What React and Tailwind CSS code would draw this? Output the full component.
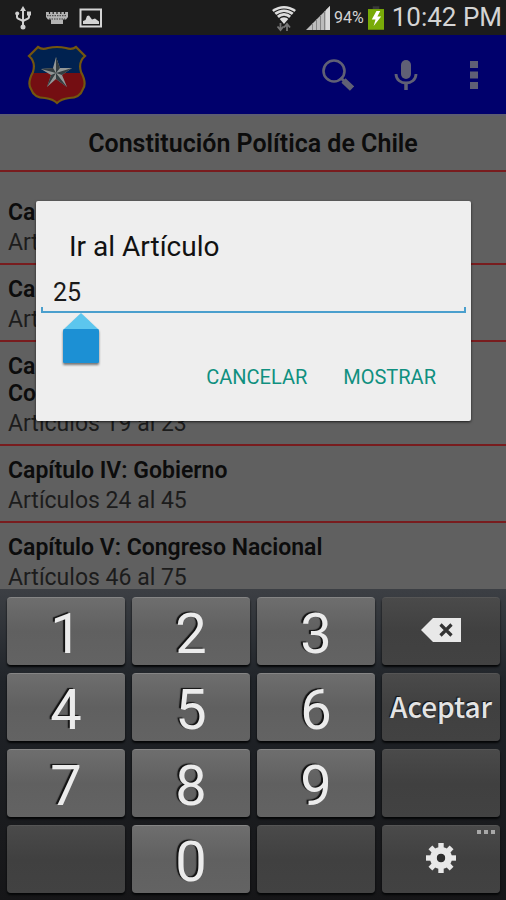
import { useState } from "react";

const CHAPTERS = [
    { title: "Capítulo I: Bases de la Institucionalidad", range: "Artículos 1 al 9" },
    { title: "Capítulo II: Nacionalidad y Ciudadanía", range: "Artículos 10 al 18" },
    { title: "Capítulo III: Derechos y Deberes Constitucionales", range: "Artículos 19 al 23" },
    { title: "Capítulo IV: Gobierno", range: "Artículos 24 al 45" },
    { title: "Capítulo V: Congreso Nacional", range: "Artículos 46 al 75" },
];

const KEYS = ["1", "2", "3", "delete", "4", "5", "6", "accept", "7", "8", "9", "blank-a", "blank-b", "0", "blank-c", "settings"];

function UsbIcon() {
    return (
        <svg className="h-6 w-4" viewBox="0 0 16 24" fill="none" stroke="#d0d0d0" strokeWidth="2">
            <path d="M8 3v17M2 8v3c0 3 6 2 6 5M14 8v3c0 3-6 2-6 5" />
            <path d="M8 0l3 5H5z" fill="#d0d0d0" stroke="none" />
            <circle cx="8" cy="21" r="2.5" fill="#d0d0d0" stroke="none" />
            <circle cx="2.2" cy="7.5" r="2" fill="#d0d0d0" stroke="none" />
            <path d="M12 5.500h4v4h-4z" fill="#d0d0d0" stroke="none" />
        </svg>
    );
}

function KeyboardIcon() {
    return (
        <svg className="h-3 w-[22px]" viewBox="0 0 22 12">
            <path d="M0 0h22v5l-2 2.500h-3V12H5V7.500H2L0 5z" fill="#b4b4b4" />
            <path d="M1 3.700h20M3 7h16" stroke="#2a2a2a" strokeWidth="0.9" strokeDasharray="1.500 1" />
            <path d="M3.500 0v2M7.200 0v2M11 0v2M14.800 0v2M18.500 0v2" stroke="#1c1c1c" strokeWidth="1.200" />
        </svg>
    );
}

function PictureIcon() {
    return (
        <svg className="h-5 w-6" viewBox="0 0 24 20">
            <path d="M1.500 1.500h20.500v17h-20.500z" fill="none" stroke="#d4d4d4" strokeWidth="2" />
            <path d="M4 16v-3l2.500-1 1.500-4 2-.5 3 4 3-1 4 3v2.500z" fill="#d4d4d4" />
        </svg>
    );
}

function WifiIcon() {
    return (
        <svg className="h-7 w-7" viewBox="0 0 28 28" fill="none">
            <path d="M2 6Q14 -2 26 6L14 20z" fill="#dedede" />
            <path d="M3 9Q14 1 25 9M5.500 12Q14 5 22.500 12M8.500 15Q14 10 19.500 15" stroke="#1c1c1c" strokeWidth="1.200" />
            <path d="M10.500 19v6M7.500 22.500l3 3.500 3-3.500M17 27v-6M14 23.500l3-3.500 3 3.500" stroke="#777" strokeWidth="1.800" />
        </svg>
    );
}

function SignalIcon() {
    return (
        <svg className="h-6 w-6" viewBox="0 0 24 24">
            <path d="M0 24L24 0v24z" fill="#bcbcbc" />
            <path d="M6.500 17v7M10.500 13v11M14.500 9v15M18.500 5v19" stroke="#858585" strokeWidth="1" />
            <path d="M20 4l4-4v24h-4z" fill="#dadada" />
        </svg>
    );
}

function BatteryIcon() {
    return (
        <svg className="h-6 w-4" viewBox="0 0 17 25">
            <path d="M5 0h7v3H5z" fill="#383838" />
            <path d="M0 3h17v22H0z" fill="#79ab08" />
            <path d="M9 5L4 14h4l-2 7 8-10h-4l3-6z" fill="#fff" />
        </svg>
    );
}

function ShieldLogo() {
    return (
        <svg className="h-[60px] w-[60px]" viewBox="0 0 60 60">
            <defs>
                <clipPath id="shield">
                    <path d="M11 2Q15 5 21 3Q30 1 39 3Q45 5 49 2L58 11Q51 17 54 27Q60 38 56 44Q53 53 42 53Q34 54 30 58Q26 54 18 53Q7 53 4 44Q0 38 6 27Q9 17 2 11z" />
                </clipPath>
            </defs>
            <g clipPath="url(#shield)">
                <path d="M0 0h60v28H0z" fill="#002250" />
                <path d="M0 28h60v32H0z" fill="#740e12" />
            </g>
            <path
                d="M11 2Q15 5 21 3Q30 1 39 3Q45 5 49 2L58 11Q51 17 54 27Q60 38 56 44Q53 53 42 53Q34 54 30 58Q26 54 18 53Q7 53 4 44Q0 38 6 27Q9 17 2 11z"
                fill="none"
                stroke="#73560f"
                strokeWidth="2.200"
            />
            <path d="M29 12l4 11 12 0-10 7 5 12-11-8-9 8 4-12-10-6 12-1z" fill="#929797" />
            <path d="M29 12l4 11-4 5zM45 23l-10 7-6-2zM40 42l-11-8v-6zM20 42l4-12 5-2zM14 24l12-1 3 5z" fill="#343d40" />
        </svg>
    );
}

function SearchIcon() {
    return (
        <svg className="h-8 w-8" viewBox="0 0 32 32" fill="none" stroke="#606075">
            <circle cx="12" cy="12" r="10.500" strokeWidth="2.600" />
            <path d="M18.500 18.500l4 4" strokeWidth="3" />
            <path d="M21.500 21.500l8.500 8" strokeWidth="6" />
        </svg>
    );
}

function MicIcon() {
    return (
        <svg className="h-8 w-6" viewBox="0 0 24 32" fill="none" stroke="#606075">
            <rect x="7" y="1" width="10" height="19" rx="5" fill="#606075" stroke="none" />
            <path d="M2 15c0 12 20 12 20 0" strokeWidth="2.800" />
            <path d="M12 24v7" strokeWidth="3.500" />
        </svg>
    );
}

function DotsIcon() {
    return (
        <svg className="h-7 w-2" viewBox="0 0 8 28" fill="#606075">
            <path d="M0 0h8v7H0zM0 10.500h8v7H0zM0 21h8v7H0z" />
        </svg>
    );
}

function BackspaceIcon() {
    return (
        <svg className="h-6 w-10" viewBox="0 0 40 24">
            <path d="M0 12L12 0h28v24H12z" fill="#e8e8e8" />
            <path d="M19.500 6.500l11 11M30.500 6.500l-11 11" stroke="#333" strokeWidth="3.200" />
        </svg>
    );
}

function GearIcon() {
    const teeth = [0, 45, 90, 135, 180, 225, 270, 315];

    return (
        <svg className="h-[30px] w-[30px]" viewBox="0 0 30 30">
            {teeth.map((angle) => (
                <path key={angle} d="M12.300 0h5.400v7h-5.400z" fill="#e8e8e8" transform={`rotate(${angle} 15 15)`} />
            ))}
            <circle cx="15" cy="15" r="7.500" fill="none" stroke="#e8e8e8" strokeWidth="7" />
            <circle cx="15" cy="15" r="4.200" fill="#2e2e2e" />
        </svg>
    );
}

function StatusBar() {
    return (
        <div className="flex h-[35px] shrink-0 items-center justify-between bg-[#1c1c1c] pr-1 pl-[15px] text-[#d4d4d4]">
            <div className="flex items-center gap-[15px]">
                <UsbIcon />
                <KeyboardIcon />
                <div className="-ml-1">
                    <PictureIcon />
                </div>
            </div>
            <div className="flex items-center">
                <WifiIcon />
                <div className="ml-2">
                    <SignalIcon />
                </div>
                <span className="ml-1 text-base">94%</span>
                <div className="ml-1">
                    <BatteryIcon />
                </div>
                <span className="ml-2 text-[26px]">10:42 PM</span>
            </div>
        </div>
    );
}

function AppBar() {
    return (
        <header className="flex h-[79px] shrink-0 items-center justify-between bg-[#00006c] pr-7 pl-[27px]">
            <ShieldLogo />
            <div className="flex items-center">
                <button type="button" aria-label="Buscar">
                    <SearchIcon />
                </button>
                <button type="button" aria-label="Dictar" className="ml-10">
                    <MicIcon />
                </button>
                <button type="button" aria-label="Más opciones" className="ml-[52px]">
                    <DotsIcon />
                </button>
            </div>
        </header>
    );
}

function GoToDialog({ value, onChange }) {
    return (
        <div className="absolute inset-0 flex items-center pr-[35px] pb-[2px] pl-9">
            <div role="dialog" aria-labelledby="dialog-title" className="w-full rounded-xs bg-[#eee] px-[5px] pt-7 pb-6 shadow-sm shadow-black/60">
                <h2 id="dialog-title" className="pl-7 text-[28px] leading-9 text-[#111]">
                    Ir al Artículo
                </h2>
                <div className="relative mt-2">
                    <input
                        aria-labelledby="dialog-title"
                        inputMode="numeric"
                        value={value}
                        onChange={(event) => onChange(event.target.value)}
                        className="block h-10 w-full border-b-2 border-[#4a9fcd] bg-transparent px-3 text-[25px] text-[#1a1a1a] outline-none"
                    />
                    <span className="absolute bottom-0 left-0 h-[6px] w-[2px] bg-[#4a9fcd]" />
                    <span className="absolute right-0 bottom-0 h-[6px] w-[2px] bg-[#4a9fcd]" />
                    <svg className="absolute top-full left-5 h-14 w-10 drop-shadow-[0_2px_1px_rgba(0,0,0,0.5)]" viewBox="0 0 40 56">
                        <path d="M20 0l18 17H2z" fill="#5cc6ee" />
                        <rect x="2" y="16" width="36" height="34" rx="1.500" fill="#1c90d4" />
                    </svg>
                </div>
                <div className="mt-11 flex justify-end gap-9 pr-[30px] text-xl leading-10 text-[#109080]">
                    <button type="button">CANCELAR</button>
                    <button type="button">MOSTRAR</button>
                </div>
            </div>
        </div>
    );
}

function Key({ name, onPress }) {
    const isDigit = name.length === 1;
    const label = { delete: "Borrar", settings: "Ajustes" }[name];

    if (isDigit) {
        return (
            <button
                type="button"
                onClick={() => onPress(name)}
                className="h-[68px] rounded-sm border-t border-[#858585] bg-linear-to-b from-[#6e6e6e] via-[#606060] to-[#636363] pt-1 text-[56px] leading-none text-[#ebebeb] shadow-[0_2px_2px_#050607] [text-shadow:-2px_-1px_1px_#111]"
            >
                {name}
            </button>
        );
    }

    return (
        <button
            type="button"
            aria-label={label}
            onClick={() => onPress(name)}
            className="relative flex h-[68px] items-center justify-center rounded-sm border-t border-[#555] bg-linear-to-b from-[#4a4a4a] via-[#404040] to-[#424242] pb-1 font-['Noto_Sans_CJK_SC',sans-serif] text-[28px] font-medium text-[#e4e4e4] shadow-[0_2px_2px_#050607]"
        >
            {name === "delete" && <BackspaceIcon />}
            {name === "accept" && <span className="[text-shadow:-1px_-1px_1px_#111]">Aceptar</span>}
            {name === "settings" && (
                <>
                    <GearIcon />
                    <svg className="absolute top-1 right-1 h-1 w-5" viewBox="0 0 20 4" fill="#a8a8a8">
                        <path d="M1 0h4v4H1zM8 0h4v4H8zM15 0h4v4h-4z" />
                    </svg>
                </>
            )}
        </button>
    );
}

export default function App() {
    const [article, setArticle] = useState("25");

    const handleKey = (name) => {
        if (name === "delete") {
            setArticle(article.slice(0, -1));
        } else if (name.length === 1) {
            setArticle(article + name);
        }
    };

    return (
        <div className="flex h-screen flex-col bg-[#606060] font-[Roboto,sans-serif]">
            <StatusBar />

            <div className="relative flex min-h-0 flex-1 flex-col overflow-hidden">
                <AppBar />
                <main>
                    <h1 className="border-t-2 border-b-2 border-t-[#5d5d70] border-b-[#781c1e] pt-2 pb-[6px] text-center text-[25px] leading-10 font-semibold text-[#0c0c0c]">
                        Constitución Política de Chile
                    </h1>
                    <ul className="pt-4">
                        {CHAPTERS.map((chapter) => (
                            <li key={chapter.title} className="border-b-2 border-[#781c1e] px-2 pt-[11px] pb-[7px] text-[23px] leading-[27px]">
                                <h2 className="pr-8 font-semibold text-[#0c0c0c]">{chapter.title}</h2>
                                <p className="mt-[3px] text-[#1c1c1c]">{chapter.range}</p>
                            </li>
                        ))}
                    </ul>
                </main>
                <GoToDialog value={article} onChange={setArticle} />
            </div>

            <div className="grid shrink-0 grid-cols-4 gap-x-[7px] gap-y-2 bg-linear-to-b from-[#3c3f44] via-[#202429] via-30% to-[#161618] pt-2 pr-[6px] pb-[7px] pl-[7px]">
                {KEYS.map((name) => (
                    <Key key={name} name={name} onPress={handleKey} />
                ))}
            </div>
        </div>
    );
}
